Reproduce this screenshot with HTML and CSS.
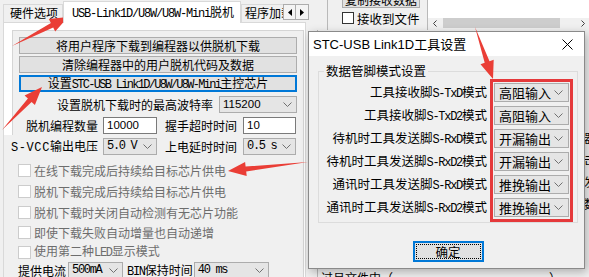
FILE: index.html
```html
<!DOCTYPE html>
<html lang="zh-CN">
<head>
<meta charset="utf-8">
<title>STC-USB Link1D工具设置</title>
<link rel="stylesheet" href="styles.css">
</head>
<body>
<div class="screen">
  <div class="win">
    <div class="left">
      <div class="tabstrip">
        <div class="tabs">
          <div class="tab t1">硬件选项</div>
          <div class="tab active"><span class="m mt">USB-Link1D/U8W/U8W-Mini</span>脱机</div>
          <div class="tab t3">程序加载</div>
        </div>
        <div class="tabscroll">
          <div class="sbtn"><svg width="4" height="7" viewBox="0 0 4 7"><polygon points="4,0 0,3.5 4,7" fill="#000"/></svg></div>
          <div class="sbtn"><svg width="4" height="7" viewBox="0 0 4 7"><polygon points="0,0 4,3.5 0,7" fill="#000"/></svg></div>
        </div>
      </div>
      <div class="page">
        <div class="frame">
          <div class="btns">
            <div class="btn"><span>将用户程序下载到编程器以供脱机下载</span></div>
            <div class="btn"><span>清除编程器中的用户脱机代码及数据</span></div>
            <div class="btn focus"><span>设置<span class="m mb">STC-USB Link1D/U8W/U8W-Mini</span>主控芯片</span></div>
          </div>
          <div class="baud">
            <span>设置脱机下载时的最高波特率</span>
            <div class="combo wb"><span class="sans">115200</span><svg class="chev" width="9" height="5" viewBox="0 0 9 5"><polyline points="0.5,0.5 4.5,4.5 8.5,0.5"/></svg></div>
          </div>
          <div class="frow">
            <span class="l1"><span>脱机编程数量</span></span>
            <div class="edit f1"><span class="sans">10000</span></div>
            <span class="l2">握手超时时间</span>
            <div class="edit f2"><span class="sans">10</span></div>
          </div>
        </div>
        <div class="lower">
          <div class="frow first">
            <span class="l1"><span><span class="m mw">S-VCC</span>输出电压</span></span>
            <div class="combo f1"><span class="m">5.0 V</span><svg class="chev" width="9" height="5" viewBox="0 0 9 5"><polyline points="0.5,0.5 4.5,4.5 8.5,0.5"/></svg></div>
            <span class="l2">上电延时时间</span>
            <div class="combo f2"><span class="m">0.5 s</span><svg class="chev" width="9" height="5" viewBox="0 0 9 5"><polyline points="0.5,0.5 4.5,4.5 8.5,0.5"/></svg></div>
          </div>
          <ul class="checks">
            <li><span class="cb"></span><span>在线下载完成后持续给目标芯片供电</span></li>
            <li><span class="cb"></span><span>脱机下载完成后持续给目标芯片供电</span></li>
            <li><span class="cb"></span><span>脱机下载时关闭自动检测有无芯片功能</span></li>
            <li><span class="cb"></span><span>即使下载失败自动增量也自动递增</span></li>
            <li><span class="cb"></span><span>使用第二种<span class="m">LED</span>显示模式</span></li>
          </ul>
          <div class="lrow">
            <span>提供电流</span>
            <div class="combo c500"><span class="m">500mA</span><svg class="chev" width="9" height="5" viewBox="0 0 9 5"><polyline points="0.5,0.5 4.5,4.5 8.5,0.5"/></svg></div>
            <span class="bin"><span class="m">BIN</span>保持时间</span>
            <div class="combo c40"><span class="m">40 ms</span><svg class="chev" width="9" height="5" viewBox="0 0 9 5"><polyline points="0.5,0.5 4.5,4.5 8.5,0.5"/></svg></div>
          </div>
        </div>
      </div>
    </div>
    <div class="right">
      <div class="rtop">
        <div class="rgap"></div>
        <div class="rbox">
          <div class="cbtn">复制接收数据</div>
          <div class="rcheck"><span class="cbon"></span><span>接收到文件</span></div>
        </div>
        <div class="rtext">
          <div class="rarea"></div>
          <div class="hscroll">
            <div class="harr"><svg width="4" height="7" viewBox="0 0 4 7"><polyline points="3.5,0.5 0.5,3.5 3.5,6.5"/></svg></div>
            <div class="thumb"></div>
            <div class="hspace"></div>
            <div class="harr"><svg width="4" height="7" viewBox="0 0 4 7"><polyline points="0.5,0.5 3.5,3.5 0.5,6.5"/></svg></div>
          </div>
        </div>
      </div>
      <div class="rbody">
        <div class="rlog">
          <div class="logmain">
            <div class="logline">过吕文件中（　　　　　　　　　　　　　）</div>
          </div>
          <div class="frag">器<br>击<br>发<br>数</div>
        </div>
      </div>
    </div>
  </div>

  <div class="dialog">
    <div class="dtitle">
      <span class="dt">STC-USB Link1D工具设置</span>
      <svg class="close" width="11" height="11" viewBox="0 0 11 11"><path d="M0.5 0.5 L10.5 10.5 M10.5 0.5 L0.5 10.5"/></svg>
    </div>
    <div class="dbody">
      <fieldset class="grp">
        <legend>数据管脚模式设置</legend>
        <div class="pins">
          <span class="pl">工具接收脚<span class="m">S-TxD</span>模式</span>
          <div class="dcombo">高阻输入<svg class="chev" width="9" height="5" viewBox="0 0 9 5"><polyline points="0.5,0.5 4.5,4.5 8.5,0.5"/></svg></div>
          <span class="pl">工具接收脚<span class="m">S-TxD2</span>模式</span>
          <div class="dcombo">高阻输入<svg class="chev" width="9" height="5" viewBox="0 0 9 5"><polyline points="0.5,0.5 4.5,4.5 8.5,0.5"/></svg></div>
          <span class="pl">待机时工具发送脚<span class="m">S-RxD</span>模式</span>
          <div class="dcombo">开漏输出<svg class="chev" width="9" height="5" viewBox="0 0 9 5"><polyline points="0.5,0.5 4.5,4.5 8.5,0.5"/></svg></div>
          <span class="pl">待机时工具发送脚<span class="m">S-RxD2</span>模式</span>
          <div class="dcombo">开漏输出<svg class="chev" width="9" height="5" viewBox="0 0 9 5"><polyline points="0.5,0.5 4.5,4.5 8.5,0.5"/></svg></div>
          <span class="pl">通讯时工具发送脚<span class="m">S-RxD</span>模式</span>
          <div class="dcombo">推挽输出<svg class="chev" width="9" height="5" viewBox="0 0 9 5"><polyline points="0.5,0.5 4.5,4.5 8.5,0.5"/></svg></div>
          <span class="pl">通讯时工具发送脚<span class="m">S-RxD2</span>模式</span>
          <div class="dcombo">推挽输出<svg class="chev" width="9" height="5" viewBox="0 0 9 5"><polyline points="0.5,0.5 4.5,4.5 8.5,0.5"/></svg></div>
        </div>
      </fieldset>
      <div class="dfoot">
        <div class="okbtn"><span>确定</span></div>
      </div>
    </div>
  </div>

  <svg class="annot" width="589" height="277" viewBox="0 0 589 277">
    <g fill="#ea3e36">
      <polygon points="12,46 53.2,27.5 55.2,31.5 68,17 48.8,19.1 50.9,23.1"/>
      <polygon points="2,130 31.6,101.9 34.9,104.9 42,87 24.6,95.4 27.9,98.5"/>
      <polygon points="308,162 245.6,166.5 245.1,162 228,171 246.7,176 246.2,171.5"/>
      <polygon points="475,27 484.7,62.8 480.5,64.3 493,79 493.7,59.7 489.5,61.2"/>
    </g>
    <rect x="491.5" y="80.5" width="80" height="140" fill="none" stroke="#e5393b" stroke-width="3"/>
  </svg>
</div>
</body>
</html>
```
FILE: styles.css
```css
* { box-sizing: border-box; }
html, body { margin: 0; padding: 0; }
body {
  width: 589px;
  height: 277px;
  overflow: hidden;
  background: #f0f0f0;
  font-family: "Noto Sans CJK SC", "Microsoft YaHei", sans-serif;
  font-size: 12px;
  line-height: 15px;
  color: #000;
}
.screen { position: relative; width: 589px; height: 277px; overflow: hidden; }
.win { display: flex; height: 277px; }

.m {
  font-family: "Liberation Mono", "Courier New", monospace;
  font-size: 12px;
  letter-spacing: -1.3px;
}
.mt { letter-spacing: -1.2px; }
.mb { letter-spacing: -1.7px; }
.mw { letter-spacing: 0.6px; }
.sans { font-family: "Liberation Sans", Arial, sans-serif; font-size: 11.5px; }

/* left pane */
.left { flex: none; width: 311px; display: flex; flex-direction: column; }
.tabstrip { flex: none; height: 22px; display: flex; align-items: flex-end; padding-left: 3px; }
.tabs { display: flex; align-items: flex-end; }
.tab {
  flex: none;
  height: 18px;
  border: 1px solid #d9d9d9;
  border-bottom: none;
  background: #f0f0f0;
  line-height: 16px;
  white-space: nowrap;
  overflow: hidden;
}
.t1 { width: 60px; padding-left: 6px; }
.tab.active {
  position: relative;
  z-index: 1;
  width: 178px;
  height: 22px;
  margin-bottom: -1px;
  padding-left: 8px;
  background: #fff;
  line-height: 20px;
}
.t3 { width: 42px; padding-left: 3px; border-right: none; }
.tabscroll { display: flex; margin-bottom: 2px; }
.sbtn {
  width: 13px;
  height: 16px;
  border: 1px solid #adadad;
  background: #f4f4f4;
  display: flex;
  align-items: center;
  justify-content: center;
}
.sbtn + .sbtn { border-left: none; }

.page {
  flex: 1;
  width: 303px;
  margin-left: 3px;
  border: 1px solid #d9d9d9;
  border-bottom: none;
  background: #fff;
  padding-top: 7px;
}
.frame {
  width: 292px;
  margin-left: 8px;
  border: 1px solid #d5d5d5;
  border-bottom: none;
  background: #f0f0f0;
  padding: 6px 6px 1px;
}
.btns { display: flex; flex-direction: column; gap: 2px; }
.btn {
  height: 17px;
  border: 1px solid #adadad;
  background: #e1e1e1;
  display: flex;
  align-items: center;
  justify-content: center;
  white-space: nowrap;
}
.btn.focus { border: 2px solid #0078d7; }

.baud { display: flex; justify-content: flex-end; align-items: center; gap: 6px; margin-top: 4px; white-space: nowrap; }
.combo {
  flex: none;
  height: 17px;
  border: 1px solid #acacac;
  background: #e5e5e5;
  display: flex;
  align-items: center;
  justify-content: space-between;
  padding: 0 4px 0 3px;
  white-space: nowrap;
}
.chev { flex: none; }
.chev polyline { fill: none; stroke: #707070; stroke-width: 1; }
.wb { width: 78px; }
.frow { display: flex; align-items: center; height: 17px; margin-top: 4px; }
.frow.first { margin-top: 0; }
.l1 { flex: none; width: 79px; margin-right: 5px; display: flex; justify-content: flex-end; white-space: nowrap; }
.l2 { flex: none; width: 72px; margin: 0 6px 0 8px; white-space: nowrap; }
.f1 { width: 54px; }
.f2 { width: 53px; }
.edit {
  flex: none;
  height: 17px;
  border: 1px solid #7a7a7a;
  background: #fff;
  padding-left: 3px;
  display: flex;
  align-items: center;
}

.lower {
  width: 300px;
  border-right: 1px solid #d5d5d5;
  background: #f0f0f0;
  padding: 3px 0 0 15px;
  height: 142px;
}
.checks { list-style: none; margin: 5px 0 0 -1px; padding: 0; }
.checks li {
  height: 20px;
  display: flex;
  align-items: center;
  gap: 3px;
  color: #6d6d6d;
  white-space: nowrap;
}
.checks li:nth-child(-n+2) { height: 21px; }
.cb { flex: none; width: 13px; height: 13px; border: 1px solid #cccccc; background: #fff; }
.lrow { display: flex; align-items: center; height: 17px; margin-left: -1px; white-space: nowrap; }
.c500 { width: 55px; margin-left: 2px; }
.bin { margin-left: 4px; }
.c40 { width: 75px; margin-left: 1px; }

/* right pane (behind dialog) */
.right { flex: 1; min-width: 0; display: flex; flex-direction: column; }
.rtop { flex: none; height: 30px; display: flex; }
.rgap { flex: none; width: 17px; border-right: 1px solid #b9b9b9; }
.rbox { flex: none; width: 99px; padding-left: 14px; }
.cbtn {
  width: 78px;
  height: 16px;
  margin-top: -8px;
  border: 1px solid #adadad;
  background: #e1e1e1;
  text-align: center;
  line-height: 14px;
  overflow: hidden;
  white-space: nowrap;
}
.rcheck { display: flex; align-items: center; gap: 3px; margin-top: 3px; height: 14px; white-space: nowrap; font-size: 12.5px; }
.cbon { flex: none; width: 12px; height: 12px; border: 1px solid #333; background: #fff; }
.rtext { flex: 1; min-width: 0; border-left: 1px solid #b9b9b9; display: flex; flex-direction: column; }
.rarea { height: 18px; background: #fff; }
.hscroll { height: 10px; display: flex; align-items: center; }
.harr { flex: none; width: 13px; display: flex; justify-content: center; }
.harr polyline { fill: none; stroke: #404040; stroke-width: 1; }
.thumb { flex: none; width: 117px; height: 10px; margin-left: 2px; background: #cdcdcd; }
.hspace { flex: 1; }

.rbody { flex: 1; display: flex; padding-left: 6px; min-height: 0; }
.rlog { flex: 1; border-left: 1px solid #b9b9b9; display: flex; min-width: 0; }
.logmain { flex: 1; min-width: 0; display: flex; flex-direction: column; justify-content: flex-end; padding-left: 3px; overflow: visible; }
.logline { margin-bottom: -9px; line-height: 16px; white-space: nowrap; }
.frag { flex: none; width: 5px; overflow: hidden; padding-top: 97px; line-height: 22px; white-space: nowrap; }

/* dialog */
.dialog {
  position: absolute;
  left: 308px;
  top: 31px;
  width: 277px;
  height: 238px;
  border: 1px solid #8a8a8a;
  background: #f0f0f0;
  box-shadow: 2px 3px 9px rgba(0, 0, 0, 0.28);
  display: flex;
  flex-direction: column;
}
.dtitle {
  flex: none;
  height: 24px;
  background: #fff;
  display: flex;
  align-items: center;
  justify-content: space-between;
  padding: 0 11px 0 4px;
}
.dt { font-family: "Liberation Sans", "Noto Sans CJK SC", sans-serif; font-size: 13px; white-space: nowrap; }
.close path { fill: none; stroke: #000; stroke-width: 1; }
.dbody { flex: 1; padding: 7px 6px 0 9px; }
.grp {
  margin: 0;
  min-width: 0;
  border: 1px solid #dcdcdc;
  padding: 4px 8px 5px 0;
}
.grp legend { margin-left: 5px; padding: 0 2px; line-height: 16px; font-size: 12.5px; }
.pins {
  display: grid;
  grid-template-columns: 1fr 75px;
  column-gap: 7px;
  row-gap: 4px;
  grid-auto-rows: 19px;
  align-items: center;
}
.pl { text-align: right; white-space: nowrap; font-size: 12.5px; }
.dcombo {
  height: 19px;
  border: 1px solid #acacac;
  background: #e5e5e5;
  display: flex;
  align-items: center;
  justify-content: space-between;
  padding: 0 5px 0 4px;
  font-size: 13px;
  white-space: nowrap;
}
.dfoot { display: flex; justify-content: center; margin-top: 18px; }
.okbtn {
  width: 71px;
  height: 21px;
  border: 2px solid #0078d7;
  background: #e1e1e1;
  padding: 1px;
}
.okbtn span {
  display: flex;
  align-items: center;
  justify-content: center;
  height: 100%;
  border: 1px dotted #000;
  font-size: 12.5px;
}

.annot { position: absolute; left: 0; top: 0; pointer-events: none; }
```
